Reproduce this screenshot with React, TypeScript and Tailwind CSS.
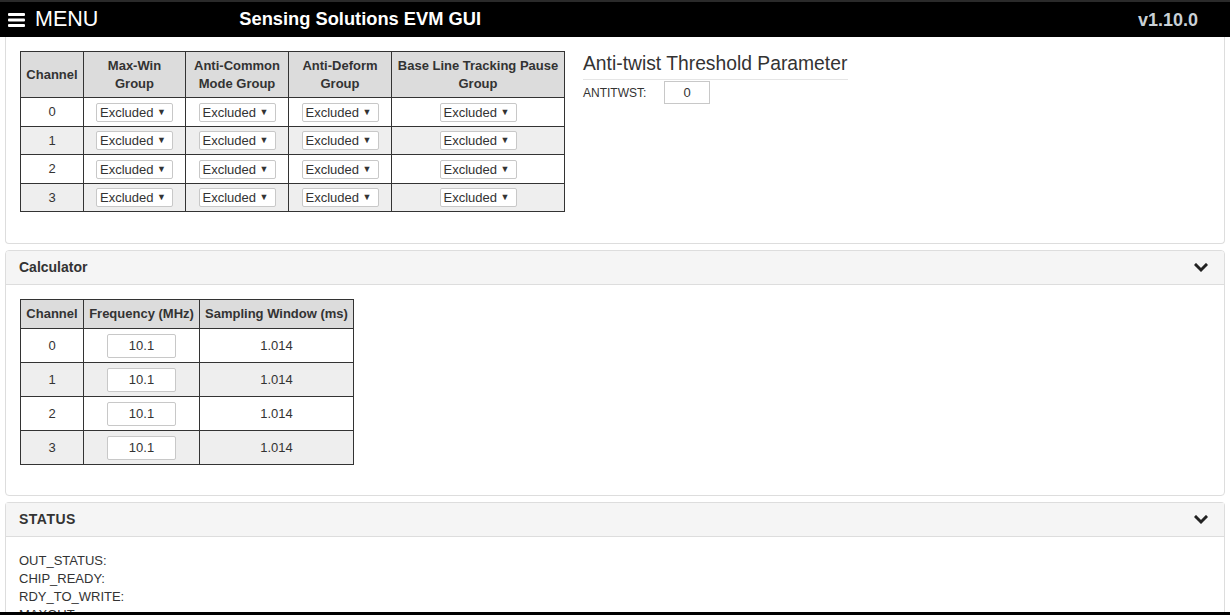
import React from "react";

const font = { fontFamily: '"Liberation Sans", Arial, sans-serif' };

function Sel() {
  return (
    <div className="inline-flex items-center justify-between w-[77px] h-[19px] border border-[#c8c8c8] rounded-[2px] bg-white pl-[3px] pr-[6px] text-[13px] text-[#333] align-middle">
      <span>Excluded</span>
      <span className="text-[9px] leading-none">▼</span>
    </div>
  );
}

function Chevron() {
  return (
    <svg width="14" height="10" viewBox="0 0 14 10" className="mr-[2px]">
      <polyline points="2,2 7,7 12,2" fill="none" stroke="#222" strokeWidth="3" strokeLinecap="square" />
    </svg>
  );
}

export default function App() {
  const rows = [0, 1, 2, 3];
  return (
    <div className="w-[1230px] min-h-[615px] bg-white text-[#333]" style={font}>
      <div className="h-[37px] bg-black border-t-2 border-[#2a2a2a] flex items-center text-white">
        <svg width="17" height="14" viewBox="0 0 17 14" className="ml-[8px]">
          <rect x="0" y="0" width="17" height="3" rx="1" fill="white" />
          <rect x="0" y="5.5" width="17" height="3" rx="1" fill="white" />
          <rect x="0" y="11" width="17" height="3" rx="1" fill="white" />
        </svg>
        <span className="ml-[10px] text-[21.5px] leading-none">MENU</span>
        <span className="ml-[141px] text-[18.3px] font-bold leading-none">Sensing Solutions EVM GUI</span>
        <span className="ml-auto mr-[32px] text-[18px] font-bold leading-none text-[#c9d0d6]">v1.10.0</span>
      </div>

      <div className="px-[5px]">
        <div className="border border-t-0 border-[#ddd] rounded-b-[4px] h-[207px] pl-[14px] pt-[14px] flex items-start gap-[18px]">
          <table className="border-collapse text-[13px] text-center">
            <thead>
              <tr className="bg-[#dcdcdc]">
                <th className="border border-[#333] w-[63px] h-[46px] font-bold leading-[18px]">Channel</th>
                <th className="border border-[#333] w-[102px] font-bold leading-[18px]">Max-Win<br />Group</th>
                <th className="border border-[#333] w-[103px] font-bold leading-[18px]">Anti-Common<br />Mode Group</th>
                <th className="border border-[#333] w-[103px] font-bold leading-[18px]">Anti-Deform<br />Group</th>
                <th className="border border-[#333] w-[173px] font-bold leading-[18px]">Base Line Tracking Pause<br />Group</th>
              </tr>
            </thead>
            <tbody>
              {rows.map((r) => (
                <tr key={r} className={r % 2 === 1 ? "bg-[#eeeeee]" : "bg-white"}>
                  <td className="border border-[#333] h-[28.5px]">{r}</td>
                  <td className="border border-[#333]"><Sel /></td>
                  <td className="border border-[#333]"><Sel /></td>
                  <td className="border border-[#333]"><Sel /></td>
                  <td className="border border-[#333]"><Sel /></td>
                </tr>
              ))}
            </tbody>
          </table>
          <div className="pt-[1px]">
            <div className="inline-block text-[19.3px] leading-[24px] pb-[3px] border-b border-[#e5e5e5] pr-[1px]">
              Anti-twist Threshold Parameter
            </div>
            <div className="flex items-center mt-[1px]">
              <span className="text-[12px] w-[81px]">ANTITWST:</span>
              <div className="w-[46px] h-[23px] border border-[#c8c8c8] flex items-center justify-center text-[13px]">0</div>
            </div>
          </div>
        </div>

        <div className="mt-[6px] border border-[#ddd] rounded-[4px] h-[246px] overflow-hidden">
          <div className="h-[34px] bg-[#f5f5f5] border-b border-[#ddd] flex items-center justify-between pl-[13px] pr-[14px]">
            <span className="text-[14px] font-bold">Calculator</span>
            <Chevron />
          </div>
          <div className="pl-[14px] pt-[14px]">
            <table className="border-collapse text-[13px] text-center">
              <thead>
                <tr className="bg-[#dcdcdc]">
                  <th className="border border-[#333] w-[63px] h-[29px] font-bold">Channel</th>
                  <th className="border border-[#333] w-[116px] font-bold">Frequency (MHz)</th>
                  <th className="border border-[#333] w-[154px] font-bold">Sampling Window (ms)</th>
                </tr>
              </thead>
              <tbody>
                {rows.map((r) => (
                  <tr key={r} className={r % 2 === 1 ? "bg-[#eeeeee]" : "bg-white"}>
                    <td className="border border-[#333] h-[34px]">{r}</td>
                    <td className="border border-[#333]">
                      <div className="mx-auto w-[69px] h-[24px] bg-white border border-[#c8c8c8] rounded-[2px] flex items-center justify-center">10.1</div>
                    </td>
                    <td className="border border-[#333]">1.014</td>
                  </tr>
                ))}
              </tbody>
            </table>
          </div>
        </div>

        <div className="mt-[6px] border border-[#ddd] rounded-t-[4px] border-b-0">
          <div className="h-[34px] bg-[#f5f5f5] border-b border-[#ddd] flex items-center justify-between pl-[13px] pr-[14px]">
            <span className="text-[14px] font-bold tracking-[0.5px]">STATUS</span>
            <Chevron />
          </div>
          <div className="pl-[13px] pt-[15px] text-[13px] leading-[18px]">
            <div>OUT_STATUS:</div>
            <div>CHIP_READY:</div>
            <div>RDY_TO_WRITE:</div>
            <div>MAXOUT:</div>
            <div className="h-[40px]"></div>
          </div>
        </div>
      </div>
      <div className="fixed left-0 right-0 bottom-0 h-[3px] bg-black"></div>
    </div>
  );
}
